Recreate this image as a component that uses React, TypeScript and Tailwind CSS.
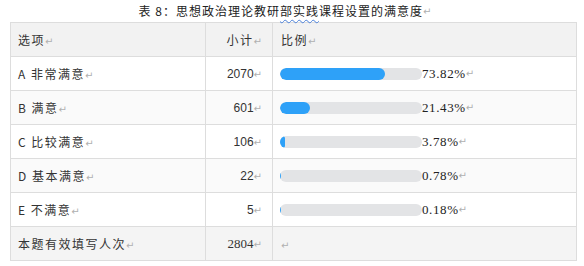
import React from 'react';

interface Row {
  label: string;
  count: number;
  pct: string;
  value: number;
  bg: string;
}

const rows: Row[] = [
  { label: 'A 非常满意', count: 2070, pct: '73.82%', value: 73.82, bg: 'bg-white' },
  { label: 'B 满意', count: 601, pct: '21.43%', value: 21.43, bg: 'bg-[#fafafa]' },
  { label: 'C 比较满意', count: 106, pct: '3.78%', value: 3.78, bg: 'bg-white' },
  { label: 'D 基本满意', count: 22, pct: '0.78%', value: 0.78, bg: 'bg-[#fafafa]' },
  { label: 'E 不满意', count: 5, pct: '0.18%', value: 0.18, bg: 'bg-white' },
];

const cjk = "font-['Noto_Sans_CJK_SC',sans-serif]";

// Word paragraph mark
function Mark() {
  return <span className="font-['DejaVu_Sans',sans-serif] text-[10px] text-[#b0b0b0] tracking-normal">↵</span>;
}

function Bar({ value }: { value: number }) {
  return (
    <div className="w-[142px] h-[12px] rounded-full bg-[#e3e4e6] overflow-hidden">
      <div className="h-full rounded-full bg-[#2ea1f8]" style={{ width: `${value}%` }} />
    </div>
  );
}

export default function App() {
  return (
    <div className={`w-[584px] h-[266px] bg-white text-[#333] ${cjk}`}>
      {/* Title */}
      <div className="h-[22px] flex items-center justify-center pr-[14px] text-[12px] tracking-[1px] text-[#222]">
        <span>表 8：思想政治理论教研</span>
        <span className="underline decoration-wavy decoration-[#4a7fd8] decoration-1 underline-offset-[3px]">部实践</span>
        <span>课程设置的满意度</span>
        <Mark />
      </div>

      <table className="ml-[10px] w-[567px] table-fixed border-collapse text-[12px]">
        <colgroup>
          <col className="w-[195px]" />
          <col className="w-[67px]" />
          <col />
        </colgroup>
        <thead>
          <tr className="h-[34px] bg-[#f2f2f2]">
            <th className="border border-[#dddddd] px-[7px] text-left font-normal tracking-[1.5px]">
              选项<Mark />
            </th>
            <th className="border border-[#dddddd] pr-[10px] text-right font-normal tracking-[1.5px]">
              小计<Mark />
            </th>
            <th className="border border-[#dddddd] px-[8px] text-left font-normal tracking-[1.5px]">
              比例<Mark />
            </th>
          </tr>
        </thead>
        <tbody>
          {rows.map((r) => (
            <tr key={r.label} className={`h-[34px] ${r.bg}`}>
              <td className="border border-[#dddddd] px-[7px] tracking-[1.5px]">
                {r.label}
                <Mark />
              </td>
              <td className="border border-[#dddddd] pr-[10px] text-right font-['Liberation_Sans',sans-serif]">
                {r.count}
                <Mark />
              </td>
              <td className="border border-[#dddddd] px-[7px]">
                <div className="flex items-center">
                  <Bar value={r.value} />
                  <span className="font-['Liberation_Serif',serif] text-[13px] tracking-[0.6px] text-[#222]">{r.pct}</span>
                  <Mark />
                </div>
              </td>
            </tr>
          ))}
          <tr className="h-[34px] bg-[#f4f4f4]">
            <td className="border border-[#dddddd] px-[7px] tracking-[1.5px]">
              本题有效填写人次<Mark />
            </td>
            <td className="border border-[#dddddd] pr-[10px] text-right font-['Liberation_Serif',serif] text-[13px]">
              2804<Mark />
            </td>
            <td className="border border-[#dddddd] px-[8px]">
              <Mark />
            </td>
          </tr>
        </tbody>
      </table>
    </div>
  );
}
